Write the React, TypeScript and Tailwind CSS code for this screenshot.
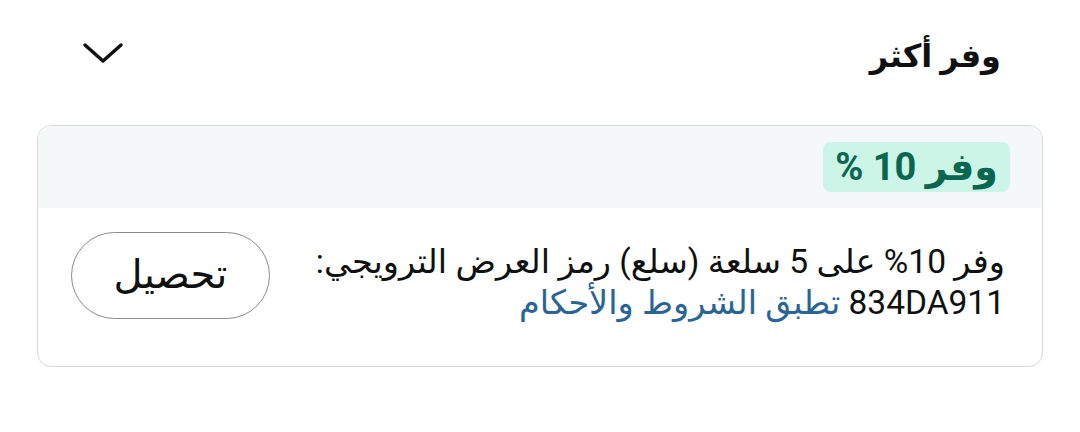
import React from 'react'

export default function App() {
  return (
    <div
      dir="rtl"
      className="w-[1080px] h-[432px] bg-white text-[#0f1111] px-[37px] pt-[20px]"
      style={{ fontFamily: 'Roboto, "DejaVu Sans", sans-serif' }}
    >
      {/* Header */}
      <div className="flex items-center justify-between h-[72px] pr-[42px] pl-[45px]">
        <h2 className="text-[32px] font-bold leading-none">وفر أكثر</h2>
        <svg width="42" height="24" viewBox="0 0 42 24" fill="none" className="-mt-[6px]">
          <path d="M3 4 L21 20 L39 4" stroke="#111" strokeWidth="3.5" strokeLinecap="round" strokeLinejoin="round" />
        </svg>
      </div>

      {/* Offer card */}
      <div className="mt-[33px] border border-[#d5d9d9] rounded-[14px] overflow-hidden">
        <div className="bg-[#f5f8f8] h-[82px] flex items-center pr-[32px]">
          <span className="bg-[#ccf5e7] text-[#0b6651] font-bold text-[38px] leading-none rounded-[8px] px-[12px] h-[50px] flex items-center">
            وفر 10 %
          </span>
        </div>
        <div className="flex items-center justify-between pr-[37px] pl-[33px] h-[158px]">
          <div className="text-[33.5px] leading-[41px] -mt-[10px]">
            <p>وفر 10% على 5 سلعة (سلع) رمز العرض الترويجي:</p>
            <p>
              834DA911 <a className="text-[#2a6496]">تطبق الشروط والأحكام</a>
            </p>
          </div>
          <button className="w-[199px] h-[87px] rounded-full border-[1.5px] border-[#8a8a8a] text-[40px] -mt-[24px] bg-white">
            تحصيل
          </button>
        </div>
      </div>
    </div>
  )
}
